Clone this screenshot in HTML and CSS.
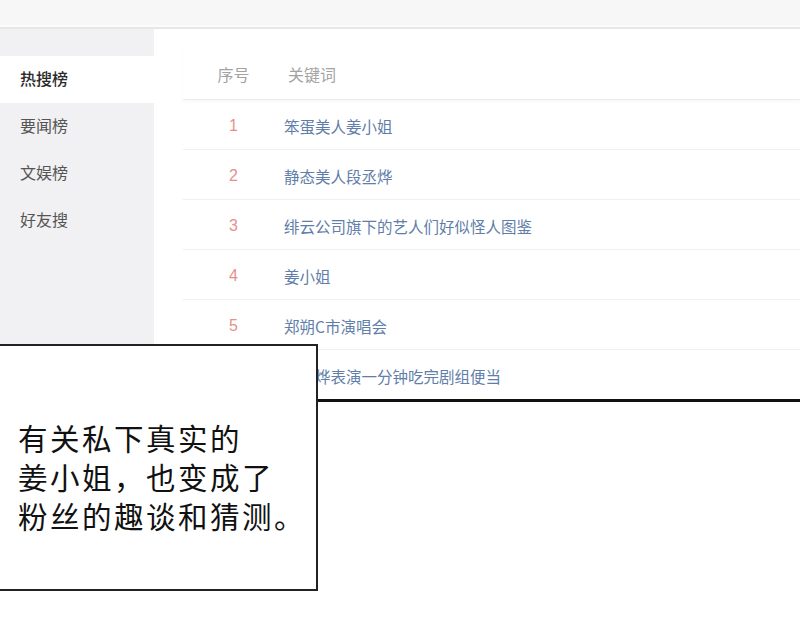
FILE: index.html
```html
<!DOCTYPE html>
<html lang="zh-CN">
<head>
    <meta charset="UTF-8">
    <meta name="viewport" content="width=device-width, initial-scale=1.0">
    <title>热搜榜</title>
    <link rel="stylesheet" href="styles.css">
</head>
<body>
    <div class="panel">
        <div class="topbar"></div>
        <div class="main">
            <aside class="tabs">
                <div class="tab active">热搜榜</div>
                <div class="tab">要闻榜</div>
                <div class="tab">文娱榜</div>
                <div class="tab">好友搜</div>
            </aside>
            <section class="board">
                <div class="row head">
                    <div class="num">序号</div>
                    <div class="word">关键词</div>
                </div>
                <div class="row">
                    <div class="num">1</div>
                    <div class="word">笨蛋美人姜小姐</div>
                </div>
                <div class="row">
                    <div class="num">2</div>
                    <div class="word">静态美人段丞烨</div>
                </div>
                <div class="row">
                    <div class="num">3</div>
                    <div class="word">绯云公司旗下的艺人们好似怪人图鉴</div>
                </div>
                <div class="row">
                    <div class="num">4</div>
                    <div class="word">姜小姐</div>
                </div>
                <div class="row">
                    <div class="num">5</div>
                    <div class="word">郑朔C市演唱会</div>
                </div>
                <div class="row last">
                    <div class="num">6</div>
                    <div class="word">段丞烨表演一分钟吃完剧组便当</div>
                </div>
            </section>
        </div>
        <div class="edge"></div>
    </div>

    <div class="caption">
        <p class="line">有关私下真实的</p>
        <p class="line">姜小姐，也变成了</p>
        <p class="line">粉丝的趣谈和猜测。</p>
    </div>
</body>
</html>
```

FILE: styles.css
```css
body {
    margin: 0;
    padding: 0;
    width: 800px;
    height: 625px;
    overflow: hidden;
    background: #fff;
    font-family: "Noto Sans CJK SC", "Liberation Sans", sans-serif;
    position: relative;
}
.panel {
    width: 800px;
}
.topbar {
    height: 25px;
    background: #f7f7f7;
    border-bottom: 1px solid #fbfbfb;
    box-shadow: 0 1px 0 #fbfbfb, 0 2px 0 #e7e7e7, 0 3px 0 #e7e7e7;
    margin-bottom: 3px;
}
.main {
    display: flex;
    height: 370px;
}
.tabs {
    width: 154px;
    background: #f1f1f3;
    padding-top: 27px;
}
.tab {
    height: 47px;
    line-height: 44px;
    padding-left: 20px;
    font-size: 16px;
    color: #555;
}
.tab.active {
    background: #fff;
    color: #2a2a2a;
    font-weight: 500;
}
.board {
    flex: 1;
    padding: 20px 0 0 29px;
}
.row {
    display: flex;
    align-items: center;
    height: 49px;
    border-bottom: 1px solid #f0f0f0;
}
.row.head {
    height: 50px;
    border-bottom: 1px solid #ececec;
    box-shadow: 0 2px 3px rgba(0, 0, 0, 0.03);
}
.row.last {
    border-bottom: none;
}
.num {
    width: 101px;
    padding-top: 3px;
    text-align: center;
    font-family: "Liberation Sans", "Noto Sans CJK SC", sans-serif;
    font-size: 16px;
    color: #e6908c;
}
.word {
    padding-top: 2px;
    font-size: 15.5px;
    color: #5f7ea9;
}
.head .num,
.head .word {
    padding-top: 0;
    font-family: "Noto Sans CJK SC", sans-serif;
    font-size: 16px;
    color: #a3a3a3;
}
.head .word {
    padding-left: 4px;
}
.edge {
    height: 3px;
    background: #111;
}
.caption {
    position: absolute;
    left: -2px;
    top: 344px;
    width: 316px;
    height: 243px;
    border: 2px solid #222;
    background: #fff;
    box-sizing: content-box;
}
.caption .line {
    margin: 0;
    padding-left: 18px;
    height: 39px;
    font-size: 29.5px;
    line-height: 39px;
    letter-spacing: 2.5px;
    color: #111;
    font-weight: 400;
}
.caption .line:first-child {
    margin-top: 72px;
}
```
